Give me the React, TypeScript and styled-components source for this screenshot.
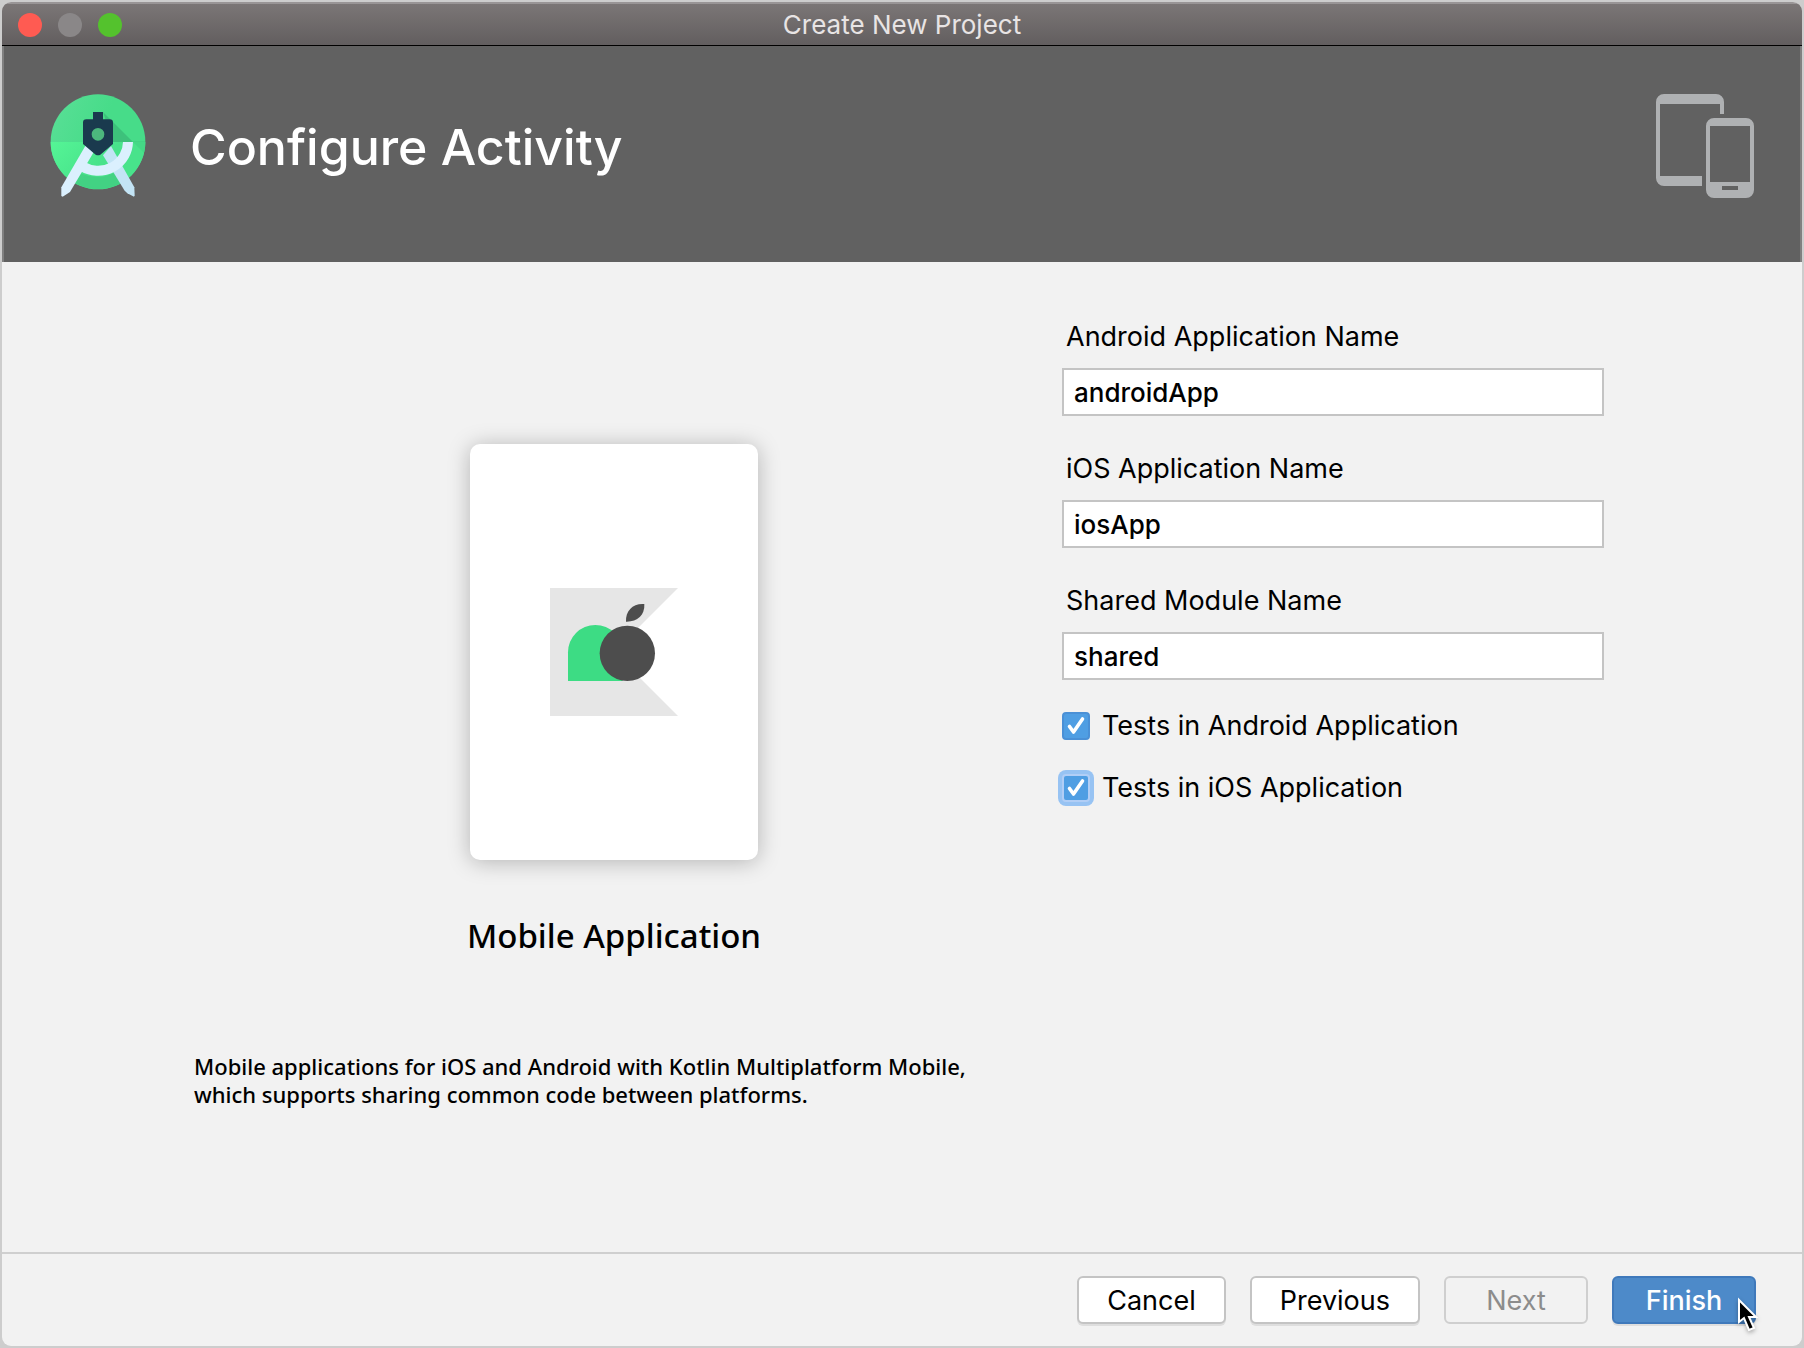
import React, { useState } from "react";
import styled, { createGlobalStyle } from "styled-components";

const UI_FONT = `Inter, Roboto, "Liberation Sans", sans-serif`;
const TEXT_FONT = `"Noto Sans", "Open Sans", "DejaVu Sans", sans-serif`;

const GlobalStyle = createGlobalStyle`
  *, *::before, *::after { box-sizing: border-box; }
  body { margin: 0; background: #cdcdcd; }
`;

const Desktop = styled.div`
  display: flex;
  min-height: 100vh;
  padding: 2px;
  background: #cdcdcd;
`;

const Window = styled.main`
  flex: 1;
  display: flex;
  flex-direction: column;
  overflow: hidden;
  border-radius: 9px;
  background: #f2f2f2;
  color: #000;
  font: 400 27px/32px ${UI_FONT};
`;

const TitleBar = styled.header`
  display: grid;
  grid-template-columns: 1fr auto 1fr;
  align-items: center;
  height: 44px;
  padding: 0 16px;
  border-top: 2px solid #999596;
  border-bottom: 1px solid #000;
  background: linear-gradient(#7b7676, #625e5f);
  color: #e8e4e4;
`;

const Lights = styled.div`
  display: flex;
  gap: 16px;
`;

const Light = styled.button<{ $color: string }>`
  width: 24px;
  height: 24px;
  padding: 0;
  border: 0;
  border-radius: 50%;
  background: ${(p) => p.$color};
`;

const WindowTitle = styled.div`
  font-size: 26px;
  line-height: 32px;
`;

const Banner = styled.section`
  display: flex;
  align-items: flex-start;
  gap: 44px;
  padding: 48px 46px 64px;
  border: solid #808080;
  border-width: 0 2px;
  background: #616161;
`;

const Heading = styled.h1`
  flex: 1;
  margin: 0;
  padding-top: 24px;
  color: #fff;
  font-size: 50px;
  font-weight: 500;
  line-height: 58px;
`;

const Content = styled.div`
  flex: 1;
  display: grid;
  grid-template-columns: minmax(0, 1fr) minmax(0, 542px);
  column-gap: 26px;
  padding: 56px 198px 60px 190px;
`;

const Preview = styled.section`
  display: flex;
  flex-direction: column;
  align-items: center;
  padding-top: 126px;
`;

const Card = styled.div`
  display: flex;
  align-items: center;
  justify-content: center;
  width: 288px;
  height: 416px;
  border-radius: 10px;
  background: #fff;
  box-shadow: 0 2px 22px rgba(0, 0, 0, 0.26);
`;

const TemplateName = styled.h2`
  margin: 56px 0 0;
  font: 500 33px/40px ${TEXT_FONT};
`;

const Description = styled.p`
  align-self: stretch;
  margin: 96px 0 0;
  padding-left: 2px;
  font: 500 22px/28px ${TEXT_FONT};
`;

const Form = styled.form`
  display: flex;
  flex-direction: column;
  gap: 30px;
`;

const Fields = styled.div`
  display: flex;
  flex-direction: column;
  gap: 34px;
`;

const Field = styled.div`
  display: flex;
  flex-direction: column;
  gap: 12px;
`;

const FieldLabel = styled.label`
  padding: 0 4px;
  line-height: 38px;
`;

const TextInput = styled.input`
  width: 100%;
  height: 48px;
  padding: 0 10px;
  border: 2px solid #c4c4c4;
  border-radius: 0;
  outline: none;
  background: #fff;
  color: #000;
  font: 500 26px/32px ${UI_FONT};
`;

const CheckRow = styled.label`
  display: flex;
  align-items: center;
  gap: 12px;
`;

const CheckBox = styled.span<{ $ring: boolean }>`
  position: relative;
  display: flex;
  width: 28px;
  height: 28px;
  border: 2px solid ${(p) => (p.$ring ? "#b1cef6" : "#4a90d6")};
  border-radius: 4px;
  background: #4f9ee3;
  box-shadow: ${(p) => (p.$ring ? "0 0 0 4px #97c3f3" : "none")};

  input {
    appearance: none;
    width: 24px;
    height: 24px;
    margin: 0;
    outline: none;
  }

  svg {
    position: absolute;
    inset: 0;
    visibility: hidden;
    pointer-events: none;
  }

  input:checked + svg {
    visibility: visible;
  }
`;

const Footer = styled.footer`
  display: flex;
  justify-content: flex-end;
  gap: 24px;
  padding: 22px 46px;
  border-top: 2px solid #cfcfcf;
`;

const Button = styled.button<{ $primary?: boolean }>`
  position: relative;
  min-width: 144px;
  height: 48px;
  padding: 2px 28px 0;
  border: 2px solid ${(p) => (p.$primary ? "#3f79bb" : "#c4c4c4")};
  border-radius: 6px;
  background: ${(p) => (p.$primary ? "#4d8ac9" : "#fff")};
  box-shadow: 0 2px 0 #dedede;
  color: ${(p) => (p.$primary ? "#fff" : "#000")};
  font: ${(p) => (p.$primary ? 500 : 400)} 27px/32px ${UI_FONT};

  &:disabled {
    border-color: #cfcfcf;
    background: #f2f2f2;
    box-shadow: none;
    color: #8c8c8c;
  }
`;

const Cursor = styled.svg`
  position: absolute;
  right: -5px;
  bottom: -12px;
  filter: drop-shadow(0 2px 2px rgba(0, 0, 0, 0.3));
`;

function StudioLogo() {
  return (
    <svg width="96" height="104" viewBox="150 282 288 312" aria-hidden="true">
      <defs>
        <linearGradient id="topGreen" x1="0" y1="0" x2="1" y2="0.4">
          <stop offset="0" stopColor="#5adf97" />
          <stop offset="0.6" stopColor="#47dc89" />
        </linearGradient>
        <linearGradient id="lowGreen" x1="0" y1="0" x2="1" y2="0.5">
          <stop offset="0" stopColor="#55f596" />
          <stop offset="0.6" stopColor="#48e38b" />
        </linearGradient>
        <clipPath id="disc">
          <circle cx="294" cy="425" r="142" />
        </clipPath>
      </defs>
      <circle cx="294" cy="425" r="142" fill="url(#topGreen)" />
      <path d="M152 426a142 142 0 0 0 284 0z" fill="url(#lowGreen)" />
      <g clipPath="url(#disc)" fill="#2b8f62">
        <path d="M309 336l90 90h-60z" opacity="0.35" />
        <path d="M399 426l37 37v-40h-37z" opacity="0.12" />
        <path d="M240 520q54 22 104-2l40 60H210z" opacity="0.2" />
      </g>
      <circle cx="294" cy="403" r="22" fill="#4cb77d" />
      <path d="M309 466l24-28 70 124 1 24-2 4-20-10-8-8z" fill="#c3e4f5" />
      <path d="M258 434l22 24-70 118-22 14-4-2v-26z" fill="#dbf0fe" />
      <path
        d="M384 426a90 88 0 0 1-136 74"
        fill="none"
        stroke="#dbf0fe"
        strokeWidth="30"
      />
      <path
        fill="#1a3a4e"
        fillRule="evenodd"
        d="M279 336h30v22h20q10 0 10 10v64l-38 32q-7 3-14 0l-38-32v-64q0-10 10-10h20zM294 384a19 19 0 1 0 0 38a19 19 0 1 0 0-38z"
      />
    </svg>
  );
}

function DevicesIcon() {
  return (
    <svg width="98" height="104" viewBox="0 0 98 104" fill="#afb1b3" aria-hidden="true">
      <path d="M8 0h52a8 8 0 0 1 8 8v12h-4V10H4v72h42v10H8a8 8 0 0 1-8-8V8a8 8 0 0 1 8-8z" />
      <path
        fillRule="evenodd"
        d="M58 24h32a8 8 0 0 1 8 8v64a8 8 0 0 1-8 8H58a8 8 0 0 1-8-8V32a8 8 0 0 1 8-8zM54 32v56h40V32zM66 92v4h16v-4z"
      />
    </svg>
  );
}

function MultiplatformLogo() {
  return (
    <svg width="128" height="128" viewBox="330 504 384 384" aria-hidden="true">
      <path d="M330 504h384L522 696l192 192H330z" fill="#e6e6e6" />
      <path d="M384 783v-86a82 82 0 0 1 164 0v86z" fill="#3ddc84" />
      <circle cx="562" cy="700" r="83" fill="#4d4d4d" />
      <path d="M558 605c-2-34 22-56 55-53c2 34-22 54-55 53z" fill="#4d4d4d" />
    </svg>
  );
}

function Tick() {
  return (
    <svg width="24" height="24" viewBox="0 0 24 24" aria-hidden="true">
      <path
        d="M5.500 12.500l4 5.500L18.500 5"
        fill="none"
        stroke="#fff"
        strokeWidth="3.600"
        strokeLinecap="round"
        strokeLinejoin="round"
      />
    </svg>
  );
}

const FIELDS = [
  { id: "android", label: "Android Application Name", value: "androidApp" },
  { id: "ios", label: "iOS Application Name", value: "iosApp" },
  { id: "shared", label: "Shared Module Name", value: "shared" },
];

const TESTS = [
  { id: "androidTests", label: "Tests in Android Application", focused: false },
  { id: "iosTests", label: "Tests in iOS Application", focused: true },
];

export default function App() {
  const [values, setValues] = useState<Record<string, string>>(
    Object.fromEntries(FIELDS.map((f) => [f.id, f.value]))
  );

  return (
    <>
      <GlobalStyle />
      <Desktop>
        <Window>
          <TitleBar>
            <Lights>
              <Light type="button" aria-label="Close" $color="#ff5b52" />
              <Light type="button" aria-label="Minimize" $color="#8a8788" />
              <Light type="button" aria-label="Zoom" $color="#54c22d" />
            </Lights>
            <WindowTitle>Create New Project</WindowTitle>
          </TitleBar>
          <Banner>
            <StudioLogo />
            <Heading>Configure Activity</Heading>
            <DevicesIcon />
          </Banner>
          <Content>
            <Preview>
              <Card>
                <MultiplatformLogo />
              </Card>
              <TemplateName>Mobile Application</TemplateName>
              <Description>
                Mobile applications for iOS and Android with Kotlin Multiplatform Mobile,
                <br />
                which supports sharing common code between platforms.
              </Description>
            </Preview>
            <Form onSubmit={(e) => e.preventDefault()}>
              <Fields>
                {FIELDS.map((f) => (
                  <Field key={f.id}>
                    <FieldLabel htmlFor={f.id}>{f.label}</FieldLabel>
                    <TextInput
                      id={f.id}
                      type="text"
                      value={values[f.id]}
                      onChange={(e) => setValues({ ...values, [f.id]: e.target.value })}
                    />
                  </Field>
                ))}
              </Fields>
              {TESTS.map((t) => (
                <CheckRow key={t.id} htmlFor={t.id}>
                  <CheckBox $ring={t.focused}>
                    <input id={t.id} type="checkbox" defaultChecked />
                    <Tick />
                  </CheckBox>
                  {t.label}
                </CheckRow>
              ))}
            </Form>
          </Content>
          <Footer>
            <Button type="button">Cancel</Button>
            <Button type="button">Previous</Button>
            <Button type="button" disabled>
              Next
            </Button>
            <Button type="button" $primary>
              Finish
              <Cursor width="22" height="38" viewBox="0 0 22 38" aria-hidden="true">
                <path
                  d="M2 4v22l5-4 5 12 5-2-5-11h7z"
                  fill="#000"
                  stroke="#fff"
                  strokeWidth="2"
                />
              </Cursor>
            </Button>
          </Footer>
        </Window>
      </Desktop>
    </>
  );
}
